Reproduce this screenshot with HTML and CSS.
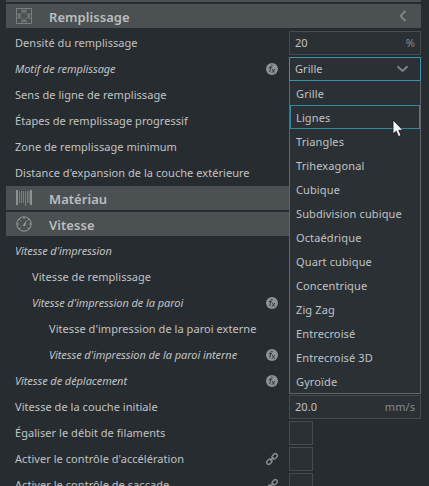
FILE: index.html
```html
<!DOCTYPE html>
<html lang="fr">
<head>
<meta charset="utf-8">
<title>Paramètres d'impression</title>
<link rel="stylesheet" href="styles.css">
</head>
<body>
<svg width="0" height="0" class="defs">
  <symbol id="fx" viewBox="0 0 12 12">
    <circle cx="6" cy="6" r="6" fill="#8f9192"/>
    <path d="M6.6 2.4C5.2 1.9 4.8 2.8 4.6 4L3.8 9.2M2.8 4.7H6.2M6.2 6L8.6 9.6M8.9 6L5.9 9.8" fill="none" stroke="#34393c" stroke-width="1"/>
  </symbol>
  <symbol id="link" viewBox="0 0 12 12">
    <g fill="none" stroke="#8f9293" stroke-width="1.3">
      <rect x="-2.9" y="-2" width="5.8" height="4" rx="2" transform="translate(3.3 8.7) rotate(-45)"/>
      <rect x="-2.9" y="-2" width="5.8" height="4" rx="2" transform="translate(8.7 3.3) rotate(-45)"/>
      <path d="M4.3 7.7L7.7 4.3"/>
    </g>
  </symbol>
</svg>
<main class="panel">
  <div class="category category-cut"></div>
  <div class="category">
    <svg class="cat-icon" viewBox="0 0 16 16"><g fill="none" stroke="#8d9192" stroke-width=".7"><rect x=".5" y=".5" width="15" height="15"/><path d="M5 .5L15.5 11M.5 5L11 15.5M11 .5L.5 11M15.5 5L5 15.5"/><path d="M5 3.2H11M5 12.8H11M3.2 5V11M12.8 5V11"/></g></svg>
    <h2>Remplissage</h2>
    <svg class="back" viewBox="0 0 8 12"><path d="M6.5 .8L1.6 6L6.5 11.2" fill="none" stroke="#868b8d" stroke-width="1.7"/></svg>
  </div>
  <section class="settings">
    <div class="row"><span class="label">Densité du remplissage</span><div class="field"><span>20</span><span class="unit">%</span></div></div>
    <div class="row"><span class="label changed">Motif de remplissage</span><svg class="mark"><use href="#fx"/></svg>
      <div class="field combo"><span>Grille</span><svg class="chevron" viewBox="0 0 12 8"><path d="M1 1.2L6 6L11 1.2" fill="none" stroke="#7d8284" stroke-width="1.9"/></svg>
        <ul class="menu">
          <li>Grille</li><li class="active">Lignes</li><li>Triangles</li><li>Trihexagonal</li><li>Cubique</li><li>Subdivision cubique</li><li>Octaédrique</li><li>Quart cubique</li><li>Concentrique</li><li>Zig Zag</li><li>Entrecroisé</li><li>Entrecroisé 3D</li><li>Gyroïde</li>
        </ul>
      </div>
    </div>
    <div class="row"><span class="label">Sens de ligne de remplissage</span></div>
    <div class="row"><span class="label">Étapes de remplissage progressif</span></div>
    <div class="row"><span class="label">Zone de remplissage minimum</span></div>
    <div class="row"><span class="label">Distance d'expansion de la couche extérieure</span></div>
  </section>
  <div class="category">
    <svg class="cat-icon" viewBox="0 0 16 18"><path d="M1 1V16M15 1V16" stroke="#a3a6a7" stroke-width="1.5"/><path d="M3.5 2V14M5.5 2V14M7.5 2V14M9.5 2V17M11.5 2V14M13 2V14" stroke="#858a8b" stroke-width=".8"/></svg>
    <h2>Matériau</h2>
  </div>
  <div class="category">
    <svg class="cat-icon" viewBox="0 0 16 16"><g fill="none" stroke="#a0a3a4" stroke-width=".9"><circle cx="8" cy="8" r="7.2"/><path d="M8 1V3M1 8H3M15 8H13M3 3L4.4 4.4M13 3L11.6 4.4M3 13L4.4 11.6M13 13L11.6 11.6" stroke-width=".8"/><path d="M7 9.5L10.5 4.8L8.7 10Z" fill="#a0a3a4" stroke-width=".4"/></g></svg>
    <h2>Vitesse</h2>
  </div>
  <section class="settings">
    <div class="row"><span class="label changed">Vitesse d'impression</span></div>
    <div class="row sub"><span class="label">Vitesse de remplissage</span></div>
    <div class="row sub"><span class="label changed">Vitesse d'impression de la paroi</span><svg class="mark"><use href="#fx"/></svg><div class="slot"></div></div>
    <div class="row subsub"><span class="label">Vitesse d'impression de la paroi externe</span></div>
    <div class="row subsub"><span class="label changed">Vitesse d'impression de la paroi interne</span><svg class="mark"><use href="#fx"/></svg><div class="slot"></div></div>
    <div class="row"><span class="label changed">Vitesse de déplacement</span><svg class="mark"><use href="#fx"/></svg><div class="slot"></div></div>
    <div class="row"><span class="label">Vitesse de la couche initiale</span><div class="field"><span>20.0</span><span class="unit">mm/s</span></div></div>
    <div class="row"><span class="label">Égaliser le débit de filaments</span><div class="slot"><div class="check"></div></div></div>
    <div class="row"><span class="label">Activer le contrôle d'accélération</span><svg class="mark"><use href="#link"/></svg><div class="slot"><div class="check"></div></div></div>
    <div class="row"><span class="label">Activer le contrôle de saccade</span><svg class="mark"><use href="#link"/></svg><div class="slot"><div class="check"></div></div></div>
  </section>
</main>
<svg class="cursor" viewBox="0 0 12 19"><path d="M1 1V15L4.2 12.2L6.5 17.6L9 16.5L6.8 11.3H11Z" fill="#f4f6f7" stroke="#14181a" stroke-width=".8"/></svg>
</body>
</html>
```

FILE: styles.css
```css
* { box-sizing: border-box; }
body {
  margin: 0;
  height: 486px;
  overflow: hidden;
  background: #272c30;
  color: #c0c3c4;
  font: 11px/24px "Noto Sans", sans-serif;
  letter-spacing: .05px;
}
.defs { position: absolute; }
.panel { width: 421px; padding-left: 6px; }
.category {
  display: flex;
  align-items: center;
  height: 24px;
  margin-bottom: 2px;
  padding: 0 14px 0 10px;
  background: #4b5052;
}
.category-cut { height: 2px; }
.category h2 {
  flex: 1;
  height: 24px;
  margin: 0 0 0 17px;
  color: #bcbebf;
  font-size: 13px;
  font-weight: 600;
  line-height: 26px;
  letter-spacing: .05px;
}
.cat-icon { width: 16px; height: 18px; }
.back { width: 8px; height: 12px; }
.settings {
  display: grid;
  gap: 2px;
  padding: 1px 0 1px 9px;
}
.row {
  display: flex;
  align-items: center;
  height: 24px;
}
.sub { padding-left: 17px; }
.subsub { padding-left: 34px; }
.label { flex: 1; height: 24px; white-space: nowrap; }
.changed { font-style: italic; letter-spacing: -.07px; }
.mark { width: 12px; height: 12px; margin-right: 11px; }
.slot { width: 132px; }
.field {
  position: relative;
  display: flex;
  align-items: center;
  justify-content: space-between;
  width: 132px;
  height: 24px;
  padding: 0 5px;
  border: 1px solid #464b4e;
  background: #2b3034;
}
.unit { color: #858a8c; }
.combo { border-color: #3594ae; padding-right: 11px; }
.chevron { width: 13px; height: 8px; }
.menu {
  position: absolute;
  z-index: 1;
  top: 23px;
  left: -1px;
  width: 132px;
  height: 313px;
  margin: 0;
  padding: 0;
  list-style: none;
  border: 1px solid #606568;
  border-top: 0;
  background: #2b3034;
  letter-spacing: .12px;
}
.menu li {
  height: 24px;
  padding-left: 6px;
  line-height: 26px;
  white-space: nowrap;
}
.menu .active {
  padding-left: 5px;
  line-height: 24px;
  border: 1px solid #3189a2;
}
.check {
  width: 24px;
  height: 24px;
  border: 1px solid #464b4e;
  background: #2b3034;
}
.cursor {
  position: absolute;
  z-index: 2;
  left: 392px;
  top: 119px;
  width: 12px;
  height: 19px;
}
```
